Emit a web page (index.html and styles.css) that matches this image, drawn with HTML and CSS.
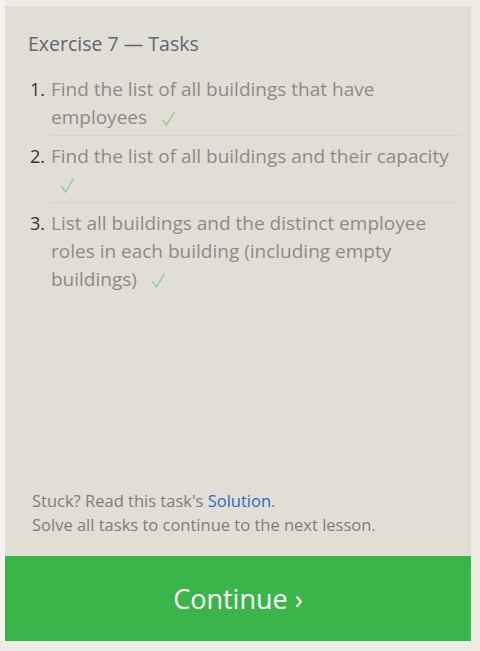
FILE: index.html
```html
<!DOCTYPE html>
<html>
<head>
<meta charset="utf-8">
<link rel="stylesheet" href="styles.css">
</head>
<body>
<div class="page">
  <div class="panel">
    <div class="content">
      <h1 class="title">Exercise 7 — Tasks</h1>
      <ol class="tasks">
        <li class="task"><span class="num">1.</span><span class="text">Find the list of all buildings that have employees <svg class="check" viewBox="0 0 15 16" width="15" height="16"><path d="M1.5 9.5 L5.5 15 L13.5 1.5" /></svg></span></li>
        <li class="task"><span class="num">2.</span><span class="text">Find the list of all buildings and their capacity <svg class="check" viewBox="0 0 15 16" width="15" height="16"><path d="M1.5 9.5 L5.5 15 L13.5 1.5" /></svg></span></li>
        <li class="task last"><span class="num">3.</span><span class="text">List all buildings and the distinct employee roles in each building (including empty buildings) <svg class="check" viewBox="0 0 15 16" width="15" height="16"><path d="M1.5 9.5 L5.5 15 L13.5 1.5" /></svg></span></li>
      </ol>
      <div class="spacer"></div>
      <div class="notes">
        <div>Stuck? Read this task's <a class="link" href="#">Solution</a>.</div>
        <div>Solve all tasks to continue to the next lesson.</div>
      </div>
    </div>
    <div class="continue">Continue ›</div>
  </div>
</div>
</body>
</html>
```
FILE: styles.css
```css
html, body {
  margin: 0;
  padding: 0;
}
body {
  background: #efece5;
  font-family: "Open Sans", "Noto Sans", sans-serif;
  width: 480px;
  height: 651px;
  overflow: hidden;
}
.page {
  padding: 6px 9px 0 5px;
  background: linear-gradient(to right, #f4f3f0 0, #f4f3f0 5px, #efece5 5px);
}
.panel {
  width: 466px;
  display: flex;
  flex-direction: column;
}
.content {
  background: #e1dfd5;
  height: 550px;
  box-sizing: border-box;
  padding: 24px 11px 19px 23px;
  display: flex;
  flex-direction: column;
}
.title {
  margin: 0;
  font-size: 19.5px;
  font-weight: 400;
  color: #5f6672;
  line-height: 28px;
}
.tasks {
  list-style: none;
  margin: 17px 0 0 0;
  padding: 0;
}
.task {
  display: flex;
  font-size: 19px;
  line-height: 28px;
  color: #8c8b86;
}
.task .num {
  color: #33332f;
  width: 23px;
  flex: none;
  padding-left: 2px;
  box-sizing: border-box;
  font-size: 18px;
}
.task .text {
  flex: 1;
  border-bottom: 1px solid #d6d4ca;
  padding-bottom: 4px;
  margin-bottom: 6px;
}
.task.last .text {
  border-bottom: none;
}
.check {
  margin-left: 9px;
  vertical-align: -2px;
  fill: none;
  stroke: #8ecb90;
  stroke-width: 1.3;
}
.spacer {
  flex: 1;
}
.notes {
  font-size: 16.5px;
  line-height: 24px;
  color: #7e7d78;
  padding-left: 4px;
}
.link {
  color: #2f67c4;
  text-decoration: none;
}
.continue {
  height: 85px;
  background: #3ab54a;
  color: #ffffff;
  font-size: 27px;
  display: flex;
  align-items: center;
  justify-content: center;
}
```
